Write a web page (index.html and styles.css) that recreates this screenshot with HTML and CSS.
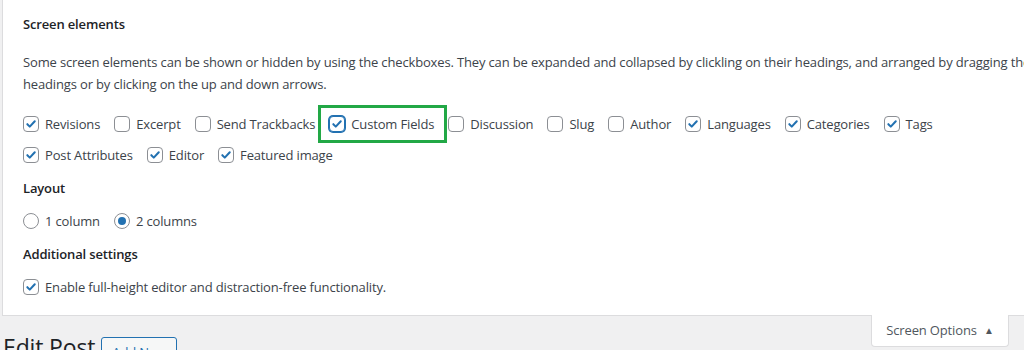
FILE: index.html
```html
<!DOCTYPE html>
<html lang="en">
<head>
  <meta charset="UTF-8">
  <meta name="viewport" content="width=device-width, initial-scale=1.0">
  <title>Edit Post</title>
  <link rel="stylesheet" href="styles.css">
</head>
<body>
  <div class="screen-meta">
    <div class="group">
      <div class="group-title">Screen elements</div>
      <p class="desc">Some screen elements can be shown or hidden by using the checkboxes. They can be expanded and collapsed by clickling on their headings, and arranged by dragging their<br>headings or by clicking on the up and down arrows.</p>
      <div class="options">
        <label class="opt"><span class="box on"><svg viewBox="0 0 16 16"><path d="M3.8 8.2 6.6 11 12.3 4.8"/></svg></span>Revisions</label>
        <label class="opt"><span class="box"></span>Excerpt</label>
        <label class="opt"><span class="box"></span>Send Trackbacks</label>
        <label class="opt marked"><span class="box on focus"><svg viewBox="0 0 16 16"><path d="M3.8 8.2 6.6 11 12.3 4.8"/></svg></span>Custom Fields</label>
        <label class="opt"><span class="box"></span>Discussion</label>
        <label class="opt"><span class="box"></span>Slug</label>
        <label class="opt"><span class="box"></span>Author</label>
        <label class="opt"><span class="box on"><svg viewBox="0 0 16 16"><path d="M3.8 8.2 6.6 11 12.3 4.8"/></svg></span>Languages</label>
        <label class="opt"><span class="box on"><svg viewBox="0 0 16 16"><path d="M3.8 8.2 6.6 11 12.3 4.8"/></svg></span>Categories</label>
        <label class="opt"><span class="box on"><svg viewBox="0 0 16 16"><path d="M3.8 8.2 6.6 11 12.3 4.8"/></svg></span>Tags</label>
      </div>
      <div class="options second">
        <label class="opt"><span class="box on"><svg viewBox="0 0 16 16"><path d="M3.8 8.2 6.6 11 12.3 4.8"/></svg></span>Post Attributes</label>
        <label class="opt"><span class="box on"><svg viewBox="0 0 16 16"><path d="M3.8 8.2 6.6 11 12.3 4.8"/></svg></span>Editor</label>
        <label class="opt"><span class="box on"><svg viewBox="0 0 16 16"><path d="M3.8 8.2 6.6 11 12.3 4.8"/></svg></span>Featured image</label>
      </div>
    </div>

    <div class="group">
      <div class="group-title">Layout</div>
      <div class="options">
        <label class="opt"><span class="radio"></span>1 column</label>
        <label class="opt"><span class="radio on"></span>2 columns</label>
      </div>
    </div>

    <div class="group">
      <div class="group-title">Additional settings</div>
      <div class="options">
        <label class="opt"><span class="box on"><svg viewBox="0 0 16 16"><path d="M3.8 8.2 6.6 11 12.3 4.8"/></svg></span>Enable full-height editor and distraction-free functionality.</label>
      </div>
    </div>
  </div>

  <div class="below">
    <div class="title">
      <h1>Edit Post</h1>
      <a class="add-new" href="#">Add New</a>
    </div>
    <button class="tab">Screen Options <span class="arrow">&#9650;</span></button>
  </div>
</body>
</html>
```

FILE: styles.css
```css
body {
  margin: 0;
  background: #f0f0f1;
  font-family: "Open Sans", "Noto Sans", sans-serif;
  font-size: 13px;
  letter-spacing: -0.15px;
  color: #3c434a;
  width: 1024px;
  height: 350px;
  overflow: hidden;
}

.screen-meta {
  margin-left: 2px;
  width: 1100px;
  background: #fff;
  border-left: 1px solid #dcdcde;
  border-bottom: 1px solid #dcdcde;
  padding: 13px 0 18px 20px;
}

.group + .group {
  margin-top: 12px;
}

.group-title {
  font-weight: 600;
  color: #1d2327;
  line-height: 22px;
  margin-bottom: 12px;
}

.desc {
  margin: 0 0 19px;
  padding-top: 4px;
  line-height: 22px;
  white-space: nowrap;
}

.options {
  display: flex;
  flex-wrap: wrap;
  column-gap: 14px;
}

.options.second {
  margin-top: 11px;
}

.opt {
  display: flex;
  align-items: center;
  gap: 6px;
  line-height: 20px;
  position: relative;
}

.box, .radio {
  width: 14px;
  height: 14px;
  border: 1px solid #8c8f94;
  border-radius: 4px;
  background: #fff;
  display: flex;
  align-items: center;
  justify-content: center;
  flex-shrink: 0;
}

.box svg {
  width: 16px;
  height: 16px;
  fill: none;
  stroke: #2271b1;
  stroke-width: 2.3;
  stroke-linecap: round;
  stroke-linejoin: round;
}

.box.focus {
  border-color: #2271b1;
  box-shadow: 0 0 0 1px #2271b1;
}

.radio {
  border-radius: 50%;
}

.radio.on::before {
  content: "";
  width: 8px;
  height: 8px;
  border-radius: 50%;
  background: #2271b1;
}

/* green highlight around the option */
.marked::after {
  content: "";
  position: absolute;
  top: -9px;
  bottom: -9px;
  left: -11px;
  right: -13px;
  border: 3px solid #22a846;
  pointer-events: none;
}

.below {
  display: flex;
  align-items: flex-start;
  padding-right: 15px;
}

.title {
  display: flex;
  align-items: flex-start;
  gap: 6px;
  padding: 16px 0 0 3px;
}

h1 {
  margin: 0;
  font-size: 23px;
  font-weight: 400;
  line-height: 30px;
  color: #1d2327;
}

.add-new {
  margin-top: 5px;
  border: 1px solid #2271b1;
  border-radius: 3px;
  padding: 4px 10px;
  color: #2271b1;
  text-decoration: none;
  line-height: 20px;
  background: #f6f7f7;
}

.tab {
  margin-left: auto;
  margin-top: -1px;
  width: 138px;
  height: 32px;
  background: #fff;
  border: 1px solid #dcdcde;
  border-top: none;
  border-radius: 0 0 4px 4px;
  font-family: inherit;
  font-size: 13px;
  letter-spacing: -0.15px;
  color: #50575e;
  padding: 0 0 2px;
}

.arrow {
  font-size: 10px;
  margin-left: 4px;
  vertical-align: 1px;
}
```
